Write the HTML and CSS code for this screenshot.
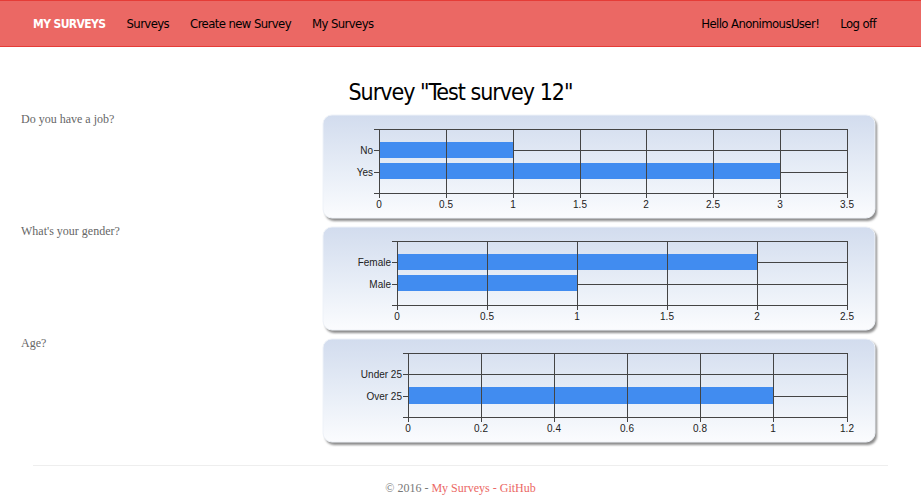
FILE: index.html
```html
<!DOCTYPE html>
<html>
<head>
<meta charset="utf-8">
<title>My Surveys</title>
<link rel="stylesheet" href="styles.css">
</head>
<body>
<nav class="navbar">
  <div class="nav-left">
    <a class="brand" href="#">MY SURVEYS</a>
    <a class="nav-link" href="#">Surveys</a>
    <a class="nav-link" href="#">Create new Survey</a>
    <a class="nav-link" href="#">My Surveys</a>
  </div>
  <div class="nav-right">
    <a class="nav-link" href="#">Hello AnonimousUser!</a>
    <a class="nav-link" href="#">Log off</a>
  </div>
</nav>

<main class="content">
  <h2 class="title">Survey "Test survey 12"</h2>

  <div class="row">
    <div class="question">Do you have a job?</div>
    <svg class="chart" width="560" height="112" viewBox="0 0 560 112">
      <defs>
        <linearGradient id="bg" x1="0" y1="0" x2="0" y2="1">
          <stop offset="0" stop-color="#d2dcee"/>
          <stop offset="0.55" stop-color="#e8eef7"/>
          <stop offset="1" stop-color="#fbfcfe"/>
        </linearGradient>
        <filter id="blur" x="-5%" y="-10%" width="110%" height="120%">
          <feGaussianBlur stdDeviation="1.2"/>
        </filter>
      </defs>
      <rect x="5" y="4" width="552" height="104" rx="9" fill="#8c8c8c" filter="url(#blur)"/>
      <rect x="3" y="2" width="552" height="103" rx="9" fill="url(#bg)" stroke="#eef2f8"/>
      <g stroke="#444" stroke-width="1" shape-rendering="crispEdges">
        <line x1="54" y1="16.5" x2="527" y2="16.5"/>
        <line x1="54" y1="37.5" x2="527" y2="37.5"/>
        <line x1="54" y1="59.5" x2="527" y2="59.5"/>
        <line x1="54" y1="80.5" x2="527" y2="80.5"/>
      </g>
      <rect x="59" y="29" width="134" height="16" fill="#418cf0"/>
      <rect x="59" y="50" width="401" height="16" fill="#418cf0"/>
      <g stroke="#444" stroke-width="1" shape-rendering="crispEdges">
        <line x1="59.5" y1="16" x2="59.5" y2="85"/>
        <line x1="126.5" y1="16" x2="126.5" y2="85"/>
        <line x1="193.5" y1="16" x2="193.5" y2="85"/>
        <line x1="260.5" y1="16" x2="260.5" y2="85"/>
        <line x1="326.5" y1="16" x2="326.5" y2="85"/>
        <line x1="393.5" y1="16" x2="393.5" y2="85"/>
        <line x1="460.5" y1="16" x2="460.5" y2="85"/>
        <line x1="527.5" y1="16" x2="527.5" y2="85"/>
      </g>
      <g class="lbl" text-anchor="end">
        <text x="53" y="41">No</text>
        <text x="53" y="63">Yes</text>
      </g>
      <g class="lbl" text-anchor="middle">
        <text x="59" y="95">0</text>
        <text x="126" y="95">0.5</text>
        <text x="193" y="95">1</text>
        <text x="260" y="95">1.5</text>
        <text x="326" y="95">2</text>
        <text x="393" y="95">2.5</text>
        <text x="460" y="95">3</text>
        <text x="527" y="95">3.5</text>
      </g>
    </svg>
  </div>

  <div class="row">
    <div class="question">What's your gender?</div>
    <svg class="chart" width="560" height="112" viewBox="0 0 560 112">
      <rect x="5" y="4" width="552" height="104" rx="9" fill="#8c8c8c" filter="url(#blur)"/>
      <rect x="3" y="2" width="552" height="103" rx="9" fill="url(#bg)" stroke="#eef2f8"/>
      <g stroke="#444" stroke-width="1" shape-rendering="crispEdges">
        <line x1="72" y1="16.5" x2="527" y2="16.5"/>
        <line x1="72" y1="37.5" x2="527" y2="37.5"/>
        <line x1="72" y1="59.5" x2="527" y2="59.5"/>
        <line x1="72" y1="80.5" x2="527" y2="80.5"/>
      </g>
      <rect x="77" y="29" width="360" height="16" fill="#418cf0"/>
      <rect x="77" y="50" width="180" height="16" fill="#418cf0"/>
      <g stroke="#444" stroke-width="1" shape-rendering="crispEdges">
        <line x1="77.5" y1="16" x2="77.5" y2="85"/>
        <line x1="167.5" y1="16" x2="167.5" y2="85"/>
        <line x1="257.5" y1="16" x2="257.5" y2="85"/>
        <line x1="347.5" y1="16" x2="347.5" y2="85"/>
        <line x1="437.5" y1="16" x2="437.5" y2="85"/>
        <line x1="527.5" y1="16" x2="527.5" y2="85"/>
      </g>
      <g class="lbl" text-anchor="end">
        <text x="71" y="41">Female</text>
        <text x="71" y="63">Male</text>
      </g>
      <g class="lbl" text-anchor="middle">
        <text x="77" y="95">0</text>
        <text x="167" y="95">0.5</text>
        <text x="257" y="95">1</text>
        <text x="347" y="95">1.5</text>
        <text x="437" y="95">2</text>
        <text x="527" y="95">2.5</text>
      </g>
    </svg>
  </div>

  <div class="row">
    <div class="question">Age?</div>
    <svg class="chart" width="560" height="112" viewBox="0 0 560 112">
      <rect x="5" y="4" width="552" height="104" rx="9" fill="#8c8c8c" filter="url(#blur)"/>
      <rect x="3" y="2" width="552" height="103" rx="9" fill="url(#bg)" stroke="#eef2f8"/>
      <g stroke="#444" stroke-width="1" shape-rendering="crispEdges">
        <line x1="83" y1="16.5" x2="527" y2="16.5"/>
        <line x1="83" y1="37.5" x2="527" y2="37.5"/>
        <line x1="83" y1="59.5" x2="527" y2="59.5"/>
        <line x1="83" y1="80.5" x2="527" y2="80.5"/>
      </g>
      <rect x="88" y="50" width="366" height="17" fill="#418cf0"/>
      <g stroke="#444" stroke-width="1" shape-rendering="crispEdges">
        <line x1="88.5" y1="16" x2="88.5" y2="85"/>
        <line x1="161.5" y1="16" x2="161.5" y2="85"/>
        <line x1="234.5" y1="16" x2="234.5" y2="85"/>
        <line x1="307.5" y1="16" x2="307.5" y2="85"/>
        <line x1="380.5" y1="16" x2="380.5" y2="85"/>
        <line x1="453.5" y1="16" x2="453.5" y2="85"/>
        <line x1="527.5" y1="16" x2="527.5" y2="85"/>
      </g>
      <g class="lbl" text-anchor="end">
        <text x="82" y="41">Under 25</text>
        <text x="82" y="63">Over 25</text>
      </g>
      <g class="lbl" text-anchor="middle">
        <text x="88" y="95">0</text>
        <text x="161" y="95">0.2</text>
        <text x="234" y="95">0.4</text>
        <text x="307" y="95">0.6</text>
        <text x="380" y="95">0.8</text>
        <text x="453" y="95">1</text>
        <text x="527" y="95">1.2</text>
      </g>
    </svg>
  </div>
</main>

<footer class="footer">
  <hr class="rule">
  <p class="copy">© 2016 - <a href="#">My Surveys - GitHub</a></p>
</footer>
</body>
</html>
```

FILE: styles.css
```css
html, body {
  margin: 0;
  padding: 0;
  background: #fff;
}

body {
  font-family: "Liberation Serif", Georgia, serif;
  color: #777;
  font-size: 12px;
}

a {
  text-decoration: none;
}

.navbar {
  height: 45px;
  background: #eb6864;
  border-top: 1px solid #e53c37;
  border-bottom: 1px solid #e53c37;
  display: flex;
  align-items: center;
  justify-content: space-between;
  padding: 0 45px 0 33px;
  font-family: "DejaVu Sans Condensed", "Liberation Sans", sans-serif;
  font-size: 13px;
  letter-spacing: -0.6px;
}

.nav-left,
.nav-right {
  display: flex;
  align-items: center;
  gap: 21px;
}

.brand {
  color: #fff;
  font-weight: bold;
  font-size: 12px;
  letter-spacing: -0.6px;
}

.nav-link {
  color: #000;
}

.content {
  display: flex;
  flex-direction: column;
}

.title {
  margin: 28px 0 0;
  height: 38px;
  text-align: center;
  font-family: "DejaVu Sans Condensed", "Liberation Sans", sans-serif;
  font-weight: normal;
  font-size: 23px;
  letter-spacing: -1px;
  line-height: 34px;
  color: #000;
}

.row {
  display: flex;
  height: 112px;
}

.question {
  width: 299px;
  padding-left: 21px;
  line-height: 12px;
  color: #666;
}

.chart {
  display: block;
}

.lbl {
  font-family: "Liberation Sans", Arial, sans-serif;
  font-size: 10px;
  fill: #222;
}

.footer {
  padding: 0 33px;
}

.rule {
  margin: 16px 0 0;
  border: 0;
  border-top: 1px solid #eee;
  height: 0;
}

.copy {
  margin: 15px 0 0;
  text-align: center;
  font-size: 12px;
  color: #777;
}

.copy a {
  color: #eb6864;
}
```
